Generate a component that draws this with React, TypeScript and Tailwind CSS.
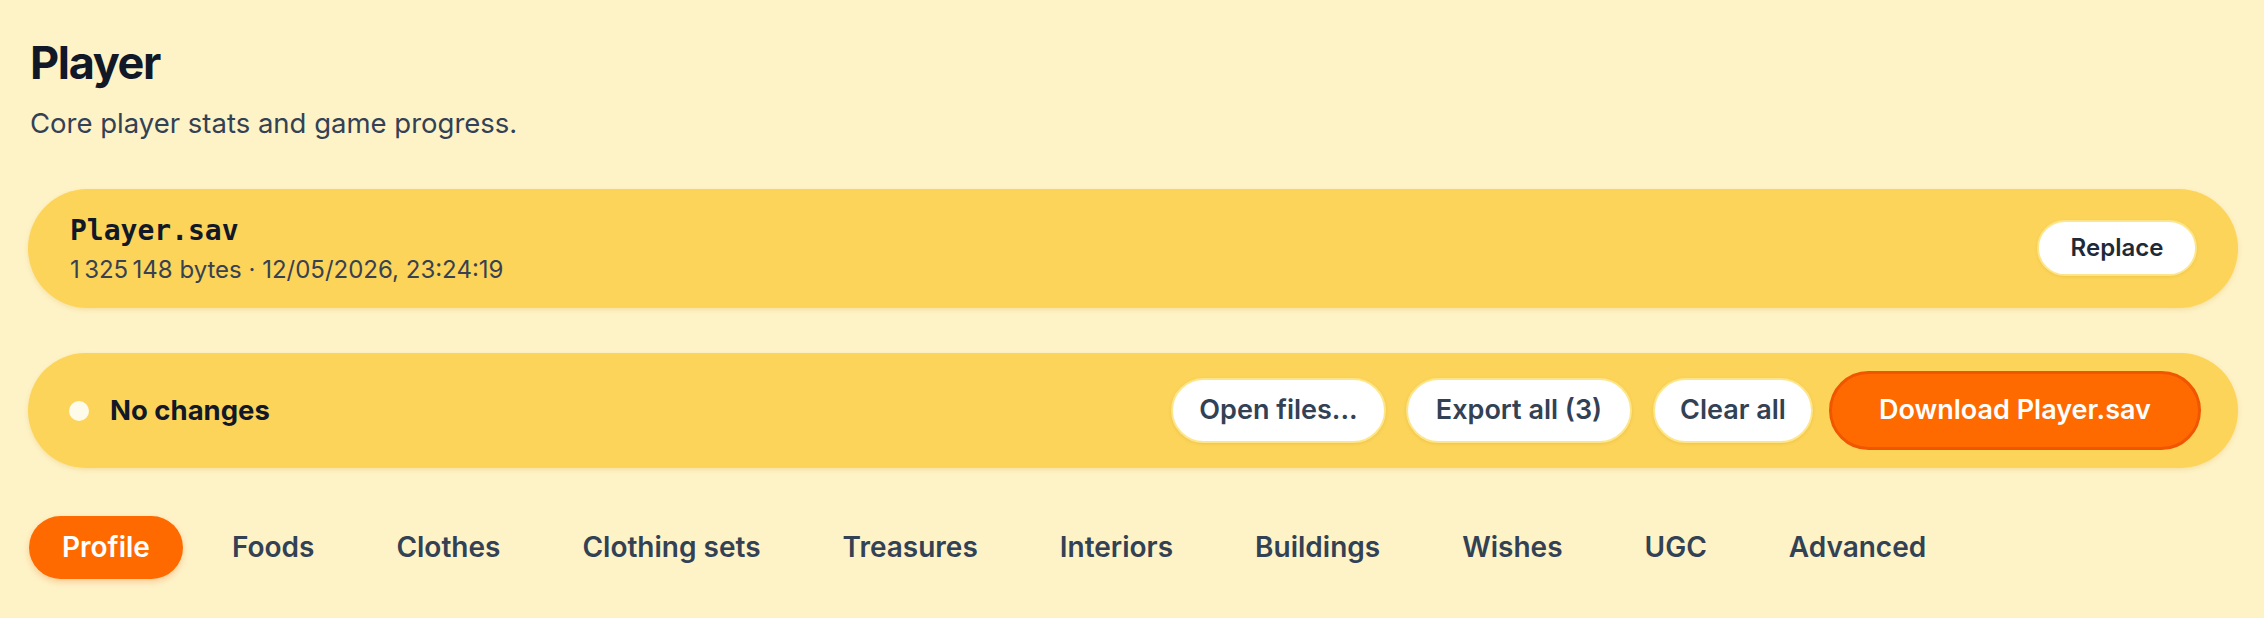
import React from "react";

const tabs = [
  "Profile",
  "Foods",
  "Clothes",
  "Clothing sets",
  "Treasures",
  "Interiors",
  "Buildings",
  "Wishes",
  "UGC",
  "Advanced",
];

const sans = "font-['Inter','Noto_Sans',sans-serif]";

export default function App() {
  const [active, setActive] = React.useState("Profile");

  return (
    <div className={`min-h-screen bg-[#fef3c7] pl-[28px] pr-[26px] pt-[40px] ${sans}`}>
      {/* page heading */}
      <h1 className="text-[45px] leading-none font-bold tracking-[-0.03em] text-[#111827] pl-[2px]">
        Player
      </h1>
      <p className="mt-[25px] text-[27.5px] leading-none text-[#334155] pl-[2px]">
        Core player stats and game progress.
      </p>

      {/* loaded save file */}
      <div className="mt-[51px] h-[119px] rounded-full bg-[#fcd45a] shadow-[0_2px_5px_rgba(202,138,4,0.18)] pl-[42px] pr-[41px] flex items-center justify-between">
        <div className="flex flex-col gap-[8px] pt-[2px]">
          <div className="font-['DejaVu_Sans_Mono',monospace] font-bold text-[28px] leading-[34px] text-[#111827]">
            Player.sav
          </div>
          <div className="text-[24px] leading-[28px] text-[#374151]">
            1{"\u202F"}325{"\u202F"}148 bytes · 12/05/2026, 23:24:19
          </div>
        </div>
        <button className="h-[56px] w-[160px] rounded-full bg-white border-2 border-[#fde68a] shadow-[0_1px_3px_rgba(202,138,4,0.2)] text-[24px] font-semibold text-[#1f2937] flex items-center justify-center">
          Replace
        </button>
      </div>

      {/* change status and actions */}
      <div className="mt-[45px] h-[115px] rounded-full bg-[#fcd45a] shadow-[0_2px_5px_rgba(202,138,4,0.18)] pl-[41px] pr-[37px] flex items-center justify-between">
        <div className="flex items-center gap-[21px] pt-[2px]">
          <span className="w-[20px] h-[20px] rounded-full bg-[#fffbeb]" />
          <span className="text-[27.5px] font-bold text-[#111827]">No changes</span>
        </div>
        <div className="flex items-center">
          <button className="h-[65px] w-[215px] rounded-full bg-white border-2 border-[#fde68a] shadow-[0_1px_3px_rgba(202,138,4,0.25)] text-[27px] font-semibold text-[#334155] flex items-center justify-center">
            Open files...
          </button>
          <button className="ml-[20px] h-[65px] w-[226px] rounded-full bg-white border-2 border-[#fde68a] shadow-[0_1px_3px_rgba(202,138,4,0.25)] text-[27px] font-semibold text-[#334155] flex items-center justify-center">
            Export all (3)
          </button>
          <button className="ml-[21px] h-[65px] w-[160px] rounded-full bg-white border-2 border-[#fde68a] shadow-[0_1px_3px_rgba(202,138,4,0.25)] text-[27px] font-semibold text-[#334155] flex items-center justify-center">
            Clear all
          </button>
          <button className="ml-[16px] h-[79px] w-[372px] rounded-full bg-[#ff6a00] border-[3px] border-[#f05600] text-[27px] font-semibold text-white flex items-center justify-center">
            Download Player.sav
          </button>
        </div>
      </div>

      {/* section tabs */}
      <nav className="mt-[48px] flex items-center gap-[16px] pl-[1px]">
        {tabs.map((t) => (
          <button
            key={t}
            onClick={() => setActive(t)}
            className={
              t === active
                ? "h-[63px] px-[33px] rounded-full bg-[#ff6a00] text-white text-[28px] font-semibold shadow-[0_3px_6px_rgba(234,88,12,0.25)]"
                : "h-[63px] px-[33px] rounded-full text-[#334155] text-[28px] font-semibold"
            }
          >
            {t}
          </button>
        ))}
      </nav>
    </div>
  );
}
